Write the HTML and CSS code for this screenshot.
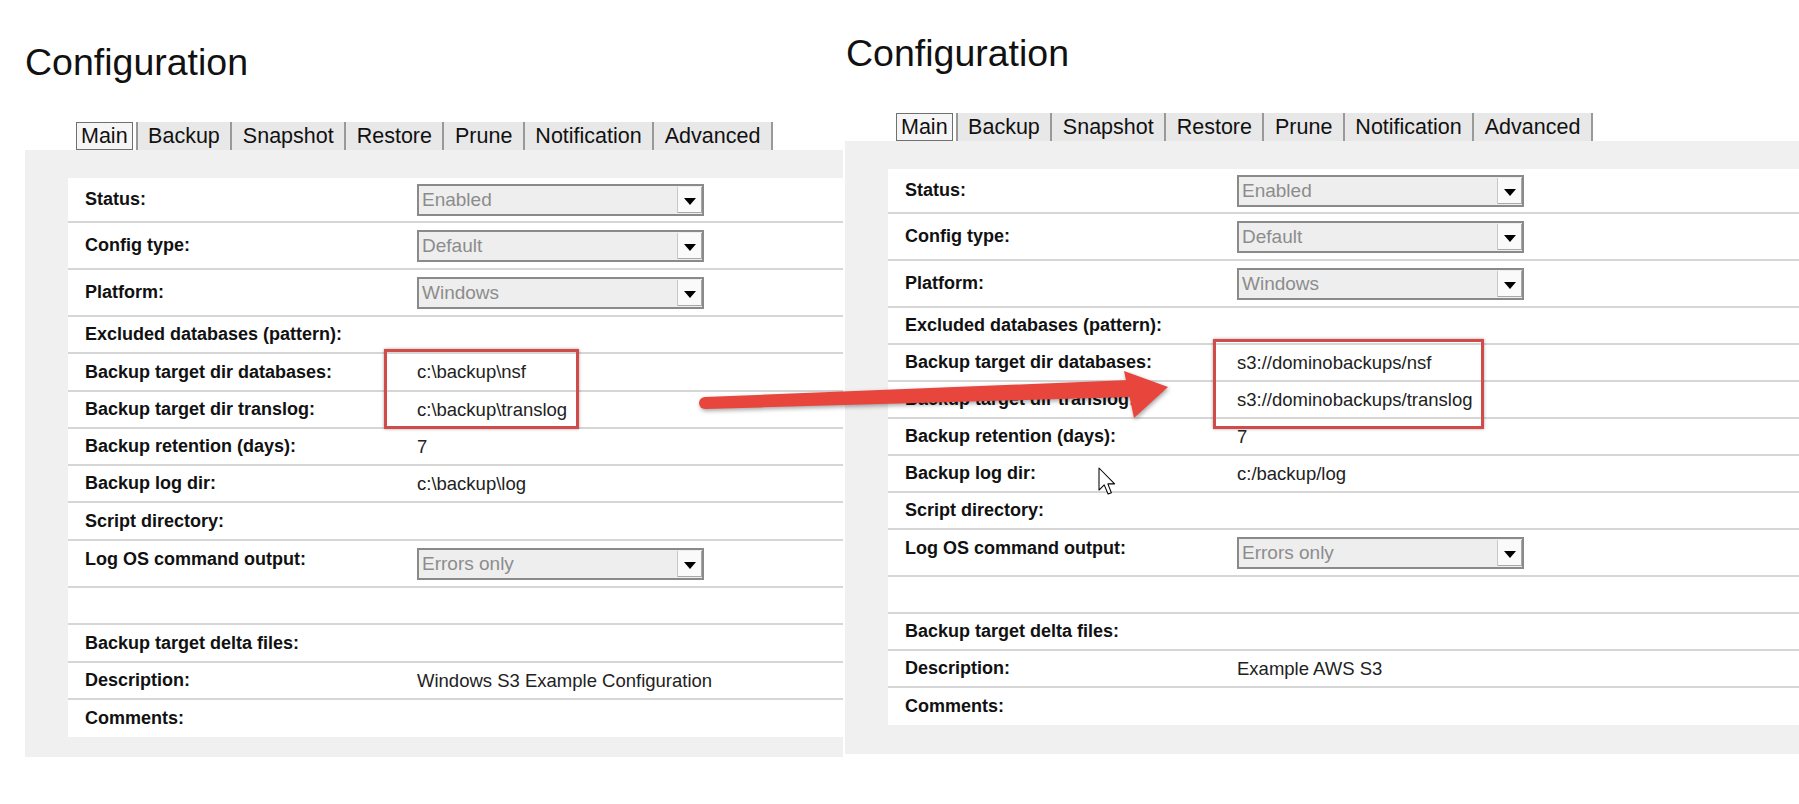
FILE: index.html
```html
<!DOCTYPE html>
<html lang="en">
<head>
    <meta charset="UTF-8">
    <title>Configuration</title>
    <link rel="stylesheet" href="styles.css">
</head>
<body>
    <div class="page">
        <!-- before: local windows paths -->
        <section class="shot shot-left">
            <h1 class="title">Configuration</h1>
            <div class="tabs">
                <div class="tab tab-active"><span>Main</span></div>
                <div class="tab">Backup</div>
                <div class="tab">Snapshot</div>
                <div class="tab">Restore</div>
                <div class="tab">Prune</div>
                <div class="tab">Notification</div>
                <div class="tab">Advanced</div>
            </div>
            <div class="panel">
                <div class="form">
                    <div class="row row-select">
                        <div class="label">Status:</div>
                        <div class="select"><span class="select-text">Enabled</span><span class="select-btn"></span></div>
                    </div>
                    <div class="row row-select">
                        <div class="label">Config type:</div>
                        <div class="select"><span class="select-text">Default</span><span class="select-btn"></span></div>
                    </div>
                    <div class="row row-select">
                        <div class="label">Platform:</div>
                        <div class="select"><span class="select-text">Windows</span><span class="select-btn"></span></div>
                    </div>
                    <div class="row">
                        <div class="label">Excluded databases (pattern):</div>
                        <div class="value"></div>
                    </div>
                    <div class="row row-tall">
                        <div class="label">Backup target dir databases:</div>
                        <div class="value">c:\backup\nsf</div>
                    </div>
                    <div class="row">
                        <div class="label">Backup target dir translog:</div>
                        <div class="value">c:\backup\translog</div>
                    </div>
                    <div class="row">
                        <div class="label">Backup retention (days):</div>
                        <div class="value">7</div>
                    </div>
                    <div class="row">
                        <div class="label">Backup log dir:</div>
                        <div class="value">c:\backup\log</div>
                    </div>
                    <div class="row row-tall">
                        <div class="label">Script directory:</div>
                        <div class="value"></div>
                    </div>
                    <div class="row row-select row-top">
                        <div class="label">Log OS command output:</div>
                        <div class="select"><span class="select-text">Errors only</span><span class="select-btn"></span></div>
                    </div>
                    <div class="row">
                        <div class="label"></div>
                        <div class="value"></div>
                    </div>
                    <div class="row row-tall">
                        <div class="label">Backup target delta files:</div>
                        <div class="value"></div>
                    </div>
                    <div class="row">
                        <div class="label">Description:</div>
                        <div class="value">Windows S3 Example Configuration</div>
                    </div>
                    <div class="row">
                        <div class="label">Comments:</div>
                        <div class="value"></div>
                    </div>
                </div>
            </div>
        </section>

        <!-- after: s3 targets -->
        <section class="shot shot-right">
            <h1 class="title">Configuration</h1>
            <div class="tabs">
                <div class="tab tab-active"><span>Main</span></div>
                <div class="tab">Backup</div>
                <div class="tab">Snapshot</div>
                <div class="tab">Restore</div>
                <div class="tab">Prune</div>
                <div class="tab">Notification</div>
                <div class="tab">Advanced</div>
            </div>
            <div class="panel">
                <div class="form">
                    <div class="row row-select">
                        <div class="label">Status:</div>
                        <div class="select"><span class="select-text">Enabled</span><span class="select-btn"></span></div>
                    </div>
                    <div class="row row-select">
                        <div class="label">Config type:</div>
                        <div class="select"><span class="select-text">Default</span><span class="select-btn"></span></div>
                    </div>
                    <div class="row row-select">
                        <div class="label">Platform:</div>
                        <div class="select"><span class="select-text">Windows</span><span class="select-btn"></span></div>
                    </div>
                    <div class="row">
                        <div class="label">Excluded databases (pattern):</div>
                        <div class="value"></div>
                    </div>
                    <div class="row">
                        <div class="label">Backup target dir databases:</div>
                        <div class="value">s3://dominobackups/nsf</div>
                    </div>
                    <div class="row">
                        <div class="label">Backup target dir translog:</div>
                        <div class="value">s3://dominobackups/translog</div>
                    </div>
                    <div class="row">
                        <div class="label">Backup retention (days):</div>
                        <div class="value">7</div>
                    </div>
                    <div class="row">
                        <div class="label">Backup log dir:</div>
                        <div class="value">c:/backup/log</div>
                    </div>
                    <div class="row">
                        <div class="label">Script directory:</div>
                        <div class="value"></div>
                    </div>
                    <div class="row row-select row-top">
                        <div class="label">Log OS command output:</div>
                        <div class="select"><span class="select-text">Errors only</span><span class="select-btn"></span></div>
                    </div>
                    <div class="row">
                        <div class="label"></div>
                        <div class="value"></div>
                    </div>
                    <div class="row">
                        <div class="label">Backup target delta files:</div>
                        <div class="value"></div>
                    </div>
                    <div class="row">
                        <div class="label">Description:</div>
                        <div class="value">Example AWS S3</div>
                    </div>
                    <div class="row">
                        <div class="label">Comments:</div>
                        <div class="value"></div>
                    </div>
                </div>
            </div>
        </section>
    </div>

    <!-- annotations drawn over both screenshots -->
    <div class="mark mark-left"></div>
    <div class="mark mark-right"></div>
    <svg class="annot" viewBox="0 0 1799 804" xmlns="http://www.w3.org/2000/svg">
        <g class="arrow">
            <polygon points="705,397 1130,380 1130,397 705,409" fill="#e8453c"/>
            <circle cx="705" cy="403" r="6" fill="#e8453c"/>
            <polygon points="1124,371 1168,387 1134,418" fill="#e8453c"/>
        </g>
        <path transform="translate(1099,468) scale(1.3)" d="M0 0 L0 17 L4 13 L7 20 L9.5 19 L6.8 12.2 L12 12.2 Z" fill="#fff" stroke="#000" stroke-width="0.8" stroke-linejoin="round"/>
    </svg>
</body>
</html>
```

FILE: styles.css
```css
body {
    margin: 0;
    font-family: "Liberation Sans", Arial, sans-serif;
    background-color: #fff;
    color: #111;
}

.page {
    display: flex;
    height: 804px;
    overflow: hidden;
}

.shot-left {
    width: 843px;
    padding: 44px 0 0 25px;
    box-sizing: border-box;
}

.shot-right {
    flex: 1;
    margin-left: 2px;
    padding-top: 35px;
}

.shot-right .title {
    margin-left: 1px;
}

.title {
    margin: 0;
    font-size: 37.5px;
    line-height: 37.5px;
    font-weight: normal;
    color: #111;
}

.tabs {
    display: flex;
    height: 28px;
    margin: 40.5px 0 0 51px;
}

.tab {
    padding: 0 10.5px;
    line-height: 28px;
    font-size: 21.5px;
    background-color: #e8e8e8;
    border-right: 2px solid #999;
}

.tab-active {
    padding: 0 3px 0 0;
    background-color: #fff;
}

.tab-active span {
    display: block;
    padding: 0 4px;
    line-height: 26px;
    border: 1px solid #707070;
    background-color: #f5f5f5;
}

.panel {
    background-color: #f0f0f0;
    padding: 28px 0 20px 43px;
}

.shot-right .panel {
    padding-bottom: 29px;
}

.form {
    background-color: #fff;
}

.row {
    display: grid;
    grid-template-columns: 332px 1fr;
    align-items: center;
    height: 37px;
    padding-left: 17px;
    border-bottom: 2px solid #d6d6d6;
    box-sizing: border-box;
}

.row:last-child {
    border-bottom: none;
}

.row-tall {
    height: 38px;
}

.row-select {
    height: 47px;
}

.row-select:first-child {
    height: 45px;
}

.row-top .label {
    margin-bottom: 8px;
}

.label {
    font-size: 18px;
    font-weight: bold;
    color: #111;
}

.value {
    font-size: 18.5px;
    color: #222;
}

.select {
    display: flex;
    width: 287px;
    height: 32px;
    box-sizing: border-box;
    border: 2px solid #8a8a8a;
    background-color: #eee;
}

.select-text {
    flex: 1;
    padding-left: 3px;
    font-size: 19px;
    line-height: 28px;
    color: #8c8c8c;
}

.select-btn {
    display: flex;
    align-items: center;
    justify-content: center;
    width: 25px;
    margin: 1px 0;
    padding-top: 3px;
    box-sizing: border-box;
    background-color: #fafafa;
    border-left: 1px solid #c8c8c8;
    box-shadow: inset -1px -1px 0 #a8a8a8;
}

.select-btn::after {
    content: "";
    border-left: 6px solid transparent;
    border-right: 6px solid transparent;
    border-top: 7px solid #000;
}

.mark {
    position: absolute;
    box-sizing: border-box;
    border: 3px solid #d14b4b;
    box-shadow: 0 0 3px rgba(0, 0, 0, 0.35);
}

.mark-left {
    left: 384px;
    top: 349px;
    width: 195px;
    height: 80px;
}

.mark-right {
    left: 1213px;
    top: 339px;
    width: 271px;
    height: 90px;
}

.annot {
    position: absolute;
    left: 0;
    top: 0;
    width: 1799px;
    height: 804px;
    pointer-events: none;
}

.arrow {
    filter: drop-shadow(1px 2px 2px rgba(0, 0, 0, 0.35));
}
```
